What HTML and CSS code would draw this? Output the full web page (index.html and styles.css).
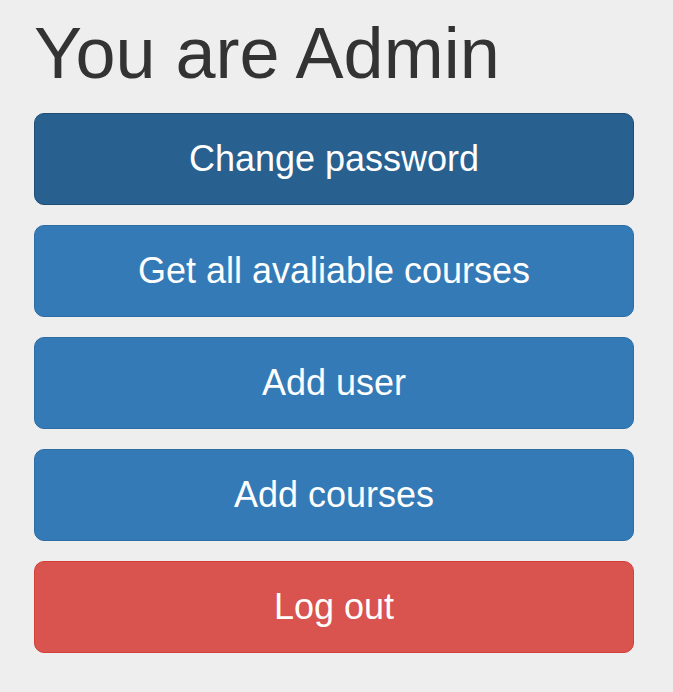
FILE: index.html
```html
<!DOCTYPE html>
<html>
<head>
<meta charset="utf-8">
<link rel="stylesheet" href="styles.css">
</head>
<body>
<div class="panel">
  <h1 class="title">You are Admin</h1>
  <div class="actions">
    <button class="btn btn-primary active">Change password</button>
    <button class="btn btn-primary">Get all avaliable courses</button>
    <button class="btn btn-primary">Add user</button>
    <button class="btn btn-primary">Add courses</button>
    <button class="btn btn-danger">Log out</button>
  </div>
</div>
</body>
</html>
```
FILE: styles.css
```css
html, body {
  margin: 0;
  background: #eeeeee;
}
body {
  font-family: "Liberation Sans", Arial, sans-serif;
}
.panel {
  padding: 14px 0 0 34px;
  width: 600px;
}
.title {
  margin: 0 0 20px 0;
  font-size: 72px;
  font-weight: normal;
  line-height: 79px;
  color: #333333;
}
.actions {
  display: flex;
  flex-direction: column;
  gap: 20px;
}
.btn {
  box-sizing: border-box;
  width: 600px;
  height: 92px;
  border: 1px solid transparent;
  border-radius: 10px;
  font-family: "Liberation Sans", Arial, sans-serif;
  font-size: 36px;
  color: #ffffff;
  padding: 0;
  cursor: pointer;
}
.btn-primary {
  background: #337ab7;
  border-color: #2e6da4;
}
.btn-primary.active {
  background: #286090;
  border-color: #204d74;
}
.btn-danger {
  background: #d9534f;
  border-color: #d43f3a;
}
```
